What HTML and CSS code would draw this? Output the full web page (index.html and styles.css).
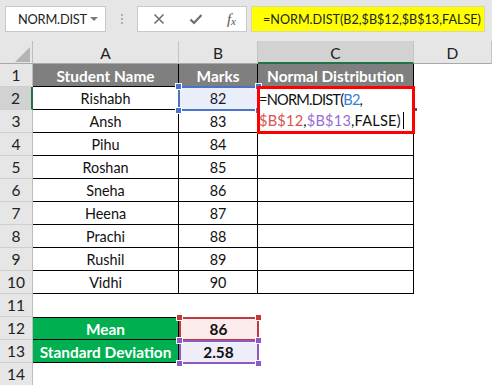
FILE: index.html
```html
<!DOCTYPE html>
<html>
<head>
<meta charset="utf-8">
<link rel="stylesheet" href="styles.css">
</head>
<body>
<div class="app">
  <div class="toolbar">
    <div class="namebox"><span class="nbtext">NORM.DIST</span><span class="caret"></span></div>
    <div class="dots"><i></i><i></i><i></i></div>
    <div class="fnbox">
      <svg class="ico" width="12" height="12" viewBox="0 0 12 12"><path d="M1.5 1.5L10.5 10.5M10.5 1.5L1.5 10.5" stroke="#6e6e6e" stroke-width="1.6" fill="none"/></svg>
      <svg class="ico" width="14" height="12" viewBox="0 0 14 12"><path d="M1.5 6.5L5 10L12.5 2" stroke="#6e6e6e" stroke-width="2.2" fill="none"/></svg>
      <span class="fx">f<sub>x</sub></span>
    </div>
    <div class="formula">=NORM.DIST(B2,$B$12,$B$13,FALSE)</div>
  </div>
  <div class="sheet">
    <div class="corner"><span class="tri"></span></div>
    <div class="ch">A</div><div class="ch">B</div><div class="ch sel">C</div><div class="ch">D</div>

    <div class="rh">1</div><div class="c t hd">Student Name</div><div class="c t hd">Marks</div><div class="c t hd">Normal Distribution</div><div class="c"></div>
    <div class="rh sel">2</div><div class="c t">Rishabh</div><div class="c t">82</div><div class="c t"></div><div class="c"></div>
    <div class="rh">3</div><div class="c t">Ansh</div><div class="c t">83</div><div class="c t"></div><div class="c"></div>
    <div class="rh">4</div><div class="c t">Pihu</div><div class="c t">84</div><div class="c t"></div><div class="c"></div>
    <div class="rh">5</div><div class="c t">Roshan</div><div class="c t">85</div><div class="c t"></div><div class="c"></div>
    <div class="rh">6</div><div class="c t">Sneha</div><div class="c t">86</div><div class="c t"></div><div class="c"></div>
    <div class="rh">7</div><div class="c t">Heena</div><div class="c t">87</div><div class="c t"></div><div class="c"></div>
    <div class="rh">8</div><div class="c t">Prachi</div><div class="c t">88</div><div class="c t"></div><div class="c"></div>
    <div class="rh">9</div><div class="c t">Rushil</div><div class="c t">89</div><div class="c t"></div><div class="c"></div>
    <div class="rh">10</div><div class="c t">Vidhi</div><div class="c t">90</div><div class="c t"></div><div class="c"></div>
    <div class="rh">11</div><div class="c"></div><div class="c"></div><div class="c"></div><div class="c"></div>
    <div class="rh">12</div><div class="c t g gtop">Mean</div><div class="c b pink">86</div><div class="c"></div><div class="c"></div>
    <div class="rh">13</div><div class="c t g">Standard Deviation</div><div class="c b lav">2.58</div><div class="c"></div><div class="c"></div>
    <div class="rh">14</div><div class="c"></div><div class="c"></div><div class="c"></div><div class="c"></div>

    <div class="selbox blue"><i class="h tl"></i><i class="h tr"></i><i class="h bl"></i><i class="h br"></i></div>
    <div class="selbox red"><i class="h tl"></i><i class="h tr"></i></div>
    <div class="selbox purple"><i class="h tl"></i><i class="h tr"></i><i class="h bl"></i><i class="h br"></i></div>
    <div class="edit">
      <div class="eline l1">=NORM.DIST(<span class="rb">B2</span>,</div>
      <div class="eline l2"><span class="rr">$B$12</span>,<span class="rp">$B$13</span>,FALSE)<span class="cursor"></span></div>
    </div>
    <span class="fillmark"></span>
  </div>
</div>
</body>
</html>
```
FILE: styles.css
```css
* { box-sizing: border-box; }
html, body { margin: 0; padding: 0; }
body { width: 492px; height: 385px; overflow: hidden; background: #fff; font-family: Lato, "Liberation Sans", sans-serif; }
.app { width: 492px; }
.toolbar {
  height: 41px; background: #e6e6e6; display: flex; align-items: flex-start;
  padding: 6px 0 0 5px;
}
.namebox {
  width: 101px; height: 26px; background: #fff; border: 1px solid #c8c8c8;
  display: flex; align-items: center; justify-content: space-between; padding: 0 7px 0 12px;
}
.nbtext { font-family: Lato, sans-serif; font-size: 12.8px; letter-spacing: -0.2px; color: #222; }
.caret { width: 0; height: 0; border-left: 4px solid transparent; border-right: 4px solid transparent; border-top: 4px solid #7a7a7a; }
.dots { width: 31px; height: 26px; display: flex; flex-direction: column; align-items: center; justify-content: center; gap: 2px; }
.dots i { display: block; width: 2px; height: 2px; background: #b0b0b0; }
.fnbox {
  width: 110px; height: 26px; background: #fff; border: 1px solid #c8c8c8;
  display: flex; align-items: center; justify-content: space-between; padding: 0 10px 0 15px;
}
.fx { font-family: "Liberation Serif", serif; font-style: italic; font-size: 15px; color: #555; line-height: 1; }
.fx sub { font-size: 11px; vertical-align: 0; position: relative; top: 1px; }
.formula {
  margin-left: 4px; width: 234px; height: 26px; background: #ffff00; border: 1px solid #d8d8a0;
  display: flex; align-items: center; padding-left: 11px;
  font-family: Lato, sans-serif; font-size: 12.6px; color: #222; white-space: nowrap; overflow: hidden;
}
.sheet {
  position: relative;
  display: grid; grid-template-columns: 33px 146px 79px 156px 78px; grid-auto-rows: 23px;
}
.corner { background: #e6e6e6; border-right: 1px solid #bdbdbd; border-bottom: 1px solid #a8a8a8; position: relative; }
.tri { position: absolute; left: 15px; top: 6px; width: 0; height: 0; border-left: 15px solid transparent; border-bottom: 15px solid #b4b4b4; }
.ch {
  background: #e6e6e6; border-right: 1px solid #c4c4c4; border-bottom: 1px solid #a8a8a8;
  display: flex; align-items: center; justify-content: center; font-size: 15.5px; color: #222; padding-top: 2px;
}
.ch.sel { background: #d2d2d2; border-bottom: 2px solid #217346; }
.rh {
  background: #e6e6e6; border-right: 1px solid #bdbdbd; border-bottom: 1px solid #cfcfcf;
  display: flex; align-items: center; justify-content: center; font-size: 15.5px; color: #222;
}
.rh.sel { background: #d2d2d2; border-right: 2px solid #217346; }
.c { display: flex; align-items: center; justify-content: center; font-size: 14.4px; color: #111; white-space: nowrap; padding-top: 1px; }
.t { border-right: 1px solid #000; border-bottom: 1px solid #000; }
.hd { background: #7f7f7f; color: #fff; font-weight: bold; font-size: 15.4px; }
.g { background: #00b050; color: #fff; font-weight: bold; font-size: 15.4px; }
.gtop { border-top: 1px solid #000; }
.b { font-weight: bold; font-size: 15.4px; }
.pink { background: #fbeceb; }
.lav { background: #efedf8; }
.selbox { position: absolute; border: 2px solid; }
.selbox.blue { left: 178px; top: 45px; width: 81px; height: 25px; border-color: #4a74c9; background: rgba(74,116,201,0.12); }
.selbox.red { left: 179px; top: 276px; width: 80px; height: 24px; border-color: #c0393e; }
.selbox.purple { left: 179px; top: 299px; width: 80px; height: 24px; border-color: #8a5cbf; }
.h { position: absolute; width: 7px; height: 7px; border: 1px solid #fff; }
.blue .h { background: #4a74c9; }
.red .h { background: #c0393e; }
.purple .h { background: #8a5cbf; }
.h.tl { left: -5px; top: -5px; }
.h.tr { right: -5px; top: -5px; }
.h.bl { left: -5px; bottom: -5px; }
.h.br { right: -5px; bottom: -5px; }
.edit {
  position: absolute; left: 257px; top: 45px; width: 158px; height: 48px;
  border: 3px solid #ff0000; background: #fff;
  display: flex; flex-direction: column; justify-content: center;
}
.eline { font-family: Lato, sans-serif; font-size: 14.6px; line-height: 21px; color: #111; white-space: nowrap; margin-left: -1px; }
.eline.l1 { letter-spacing: -0.8px; }
.eline.l2 { letter-spacing: 0.2px; }
.rb { color: #3c7dd6; }
.rr { color: #d9534f; }
.rp { color: #9a6dd3; }
.cursor { display: inline-block; width: 1px; height: 17px; background: #000; vertical-align: -3px; margin-left: 2px; }
.fillmark { position: absolute; left: 415px; top: 67px; width: 2px; height: 3px; background: #217346; }
```
